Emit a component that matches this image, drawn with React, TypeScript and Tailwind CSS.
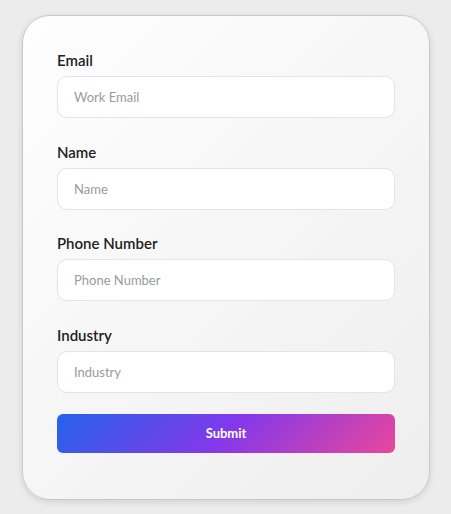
const fields = [
  { label: "Email", placeholder: "Work Email", type: "email" },
  { label: "Name", placeholder: "Name", type: "text" },
  { label: "Phone Number", placeholder: "Phone Number", type: "tel" },
  { label: "Industry", placeholder: "Industry", type: "text" },
]

export default function App() {
  return (
    <div className="min-h-screen bg-[#ececec] pt-[15px] pl-[22px] font-['Lato',sans-serif]">
      <form
        className="w-[408px] rounded-[28px] border border-[#c9c9c9] bg-[linear-gradient(135deg,#fefefe,#eeeeee)] px-[34px] pt-[33px] pb-[46px] shadow-[0_2px_6px_rgba(0,0,0,0.12)]"
        onSubmit={(e) => e.preventDefault()}
      >
        <div className="flex flex-col gap-[22.6px]">
          {fields.map((f) => (
            <div key={f.label} className="flex flex-col">
              <label className="mb-[5px] text-[15px] leading-[22px] font-semibold text-[#222]">{f.label}</label>
              <input
                type={f.type}
                placeholder={f.placeholder}
                className="h-[42px] w-full rounded-[10px] border border-[#e3e3e8] bg-white px-4 text-[13px] text-[#333] outline-none placeholder:text-[#9a9aa0]"
              />
            </div>
          ))}
        </div>
        <button
          type="submit"
          className="mt-[21.5px] h-[39px] w-full rounded-[6px] bg-[linear-gradient(135deg,#2563eb,#8338ea_50%,#e9479c)] text-[13px] font-bold text-white"
        >
          Submit
        </button>
      </form>
    </div>
  )
}
